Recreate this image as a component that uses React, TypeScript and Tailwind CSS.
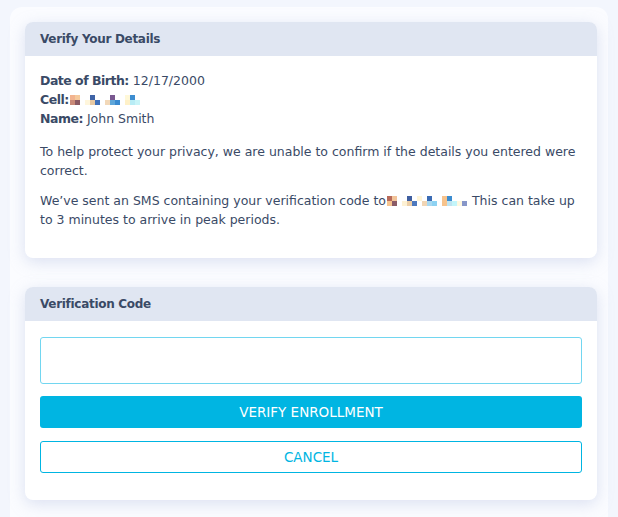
import React from "react";

type Px = { c: string; x: number; y: number };

// pixelated (censored) phone number, drawn as tiny blocks
function Redacted({ cells, w }: { cells: Px[]; w: number }) {
  return (
    <svg width={w} height={10} className="inline-block align-[-1px] mx-px" shapeRendering="crispEdges">
      {cells.map((p, i) => (
        <rect key={i} x={p.x} y={p.y} width={5} height={5} fill={p.c} />
      ))}
    </svg>
  );
}

const cellBlocks: Px[] = [
  { c: "#f2b38f", x: 0, y: 0 },
  { c: "#f5c99b", x: 5, y: 0 },
  { c: "#8a5a63", x: 5, y: 5 },
  { c: "#c98a78", x: 0, y: 5 },
  { c: "#3f63a6", x: 20, y: 0 },
  { c: "#fff6dc", x: 15, y: 5 },
  { c: "#e8c9a3", x: 20, y: 5 },
  { c: "#4170b8", x: 25, y: 5 },
  { c: "#f2d8b8", x: 35, y: 5 },
  { c: "#7a5890", x: 40, y: 0 },
  { c: "#5fa6d9", x: 40, y: 5 },
  { c: "#3a8ad0", x: 45, y: 5 },
  { c: "#fff8d8", x: 55, y: 0 },
  { c: "#3d8dd0", x: 60, y: 0 },
  { c: "#fff1c8", x: 55, y: 5 },
  { c: "#b8ecf5", x: 60, y: 5 },
  { c: "#c8f4f8", x: 65, y: 5 },
];

const smsBlocks: Px[] = [
  { c: "#b76a5a", x: 0, y: 0 },
  { c: "#f2c49a", x: 5, y: 0 },
  { c: "#f5c48f", x: 0, y: 5 },
  { c: "#8a5b66", x: 5, y: 5 },
  { c: "#fdf1d4", x: 15, y: 5 },
  { c: "#3f5ea0", x: 20, y: 0 },
  { c: "#eccfa8", x: 20, y: 5 },
  { c: "#4d79be", x: 25, y: 5 },
  { c: "#fff5d8", x: 30, y: 0 },
  { c: "#f1d5b4", x: 35, y: 5 },
  { c: "#3b6bb4", x: 40, y: 0 },
  { c: "#a8d8f0", x: 40, y: 5 },
  { c: "#8dd2f2", x: 45, y: 5 },
  { c: "#f7c38c", x: 55, y: 0 },
  { c: "#f7c38c", x: 55, y: 5 },
  { c: "#3b8cd0", x: 60, y: 0 },
  { c: "#bfe3f0", x: 60, y: 5 },
  { c: "#c3f5fa", x: 65, y: 5 },
  { c: "#fff8df", x: 70, y: 5 },
  { c: "#8796c8", x: 75, y: 5 },
];

function Card({ title, children }: { title: string; children: React.ReactNode }) {
  return (
    <div className="rounded-lg bg-white shadow-[0_4px_16px_rgba(160,175,215,0.35)] overflow-hidden">
      <div className="bg-[#e0e6f2] h-[34px] px-[15px] flex items-center font-bold text-[12px] tracking-[-0.3px] text-[#3a4a66]">
        {title}
      </div>
      {children}
    </div>
  );
}

export default function App() {
  return (
    <div
      className="min-h-[517px] bg-[#f3f6fd] pl-[10px] pr-[10px] pt-[7px] text-[#3a4a66]"
      style={{ fontFamily: '"DejaVu Sans", "Open Sans", sans-serif' }}
    >
      <div className="bg-[#fbfcff] rounded-t-xl pl-[15px] pr-[11px] pt-[15px] pb-4 flex flex-col gap-[29px] min-h-[510px]">
        <Card title="Verify Your Details">
          <div className="px-[15px] pt-[15px] pb-[29px] text-[12.5px] leading-[19px]">
            <div>
              <b className="tracking-[-0.5px]">Date of Birth:</b> 12/17/2000
            </div>
            <div>
              <b className="tracking-[-0.5px]">Cell:</b>
              <Redacted cells={cellBlocks} w={70} />
            </div>
            <div>
              <b className="tracking-[-0.5px]">Name:</b> John Smith
            </div>
            <p className="mt-[14px]">
              To help protect your privacy, we are unable to confirm if the details you entered were correct.
            </p>
            <p className="mt-[11px]">
              <span>We’ve sent an SMS containing your verification code to</span>
              <Redacted cells={smsBlocks} w={80} />
              <span> This can take up </span>
              <span>to 3 minutes to arrive in peak periods.</span>
            </p>
          </div>
        </Card>
        <Card title="Verification Code">
          <div className="px-[15px] pt-4 pb-[27px] flex flex-col">
            <input className="h-[47px] rounded-[3px] border border-[#72d6f0] outline-none px-3" />
            <button className="mt-3 h-8 rounded-[3px] bg-[#00b5e2] text-white text-[13.5px] uppercase">
              Verify Enrollment
            </button>
            <button className="mt-[13px] h-8 rounded-[3px] border border-[#00b5e2] text-[#00b5e2] text-[13.5px] uppercase">
              Cancel
            </button>
          </div>
        </Card>
      </div>
    </div>
  );
}
